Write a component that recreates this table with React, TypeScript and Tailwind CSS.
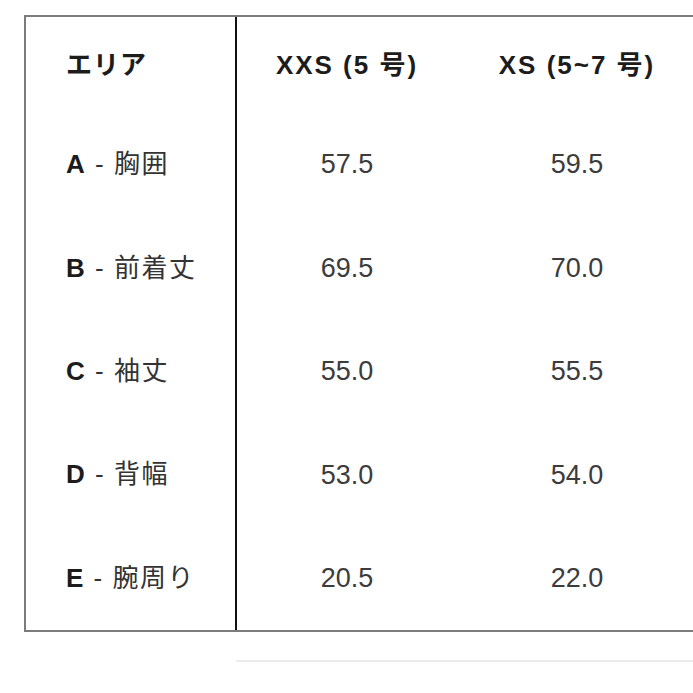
const rows = [
  { key: "A", name: "胸囲", xxs: "57.5", xs: "59.5" },
  { key: "B", name: "前着丈", xxs: "69.5", xs: "70.0" },
  { key: "C", name: "袖丈", xxs: "55.0", xs: "55.5" },
  { key: "D", name: "背幅", xxs: "53.0", xs: "54.0" },
  { key: "E", name: "腕周り", xxs: "20.5", xs: "22.0" },
];

const font = "font-['Liberation_Sans','Noto_Sans_CJK_JP',sans-serif]";

export default function App() {
  return (
    <div className={`w-[693px] h-[693px] overflow-hidden bg-white ${font} text-[#1c1c1c]`}>
      <div className="pt-[15px] pl-[24px]">
        <div className="w-[720px] border-t-2 border-l-2 border-b-2 border-[#7c7c7c]">
          <div className="grid grid-cols-[209px_2px_220px_240px] h-[96px] items-center">
            <div className="pl-[40px] text-[26px] font-bold tracking-[1px]">エリア</div>
            <div className="h-full bg-[#111]" />
            <div className="text-center text-[26px] font-bold tracking-[2px]">XXS (5 号)</div>
            <div className="text-center text-[26px] font-bold tracking-[2px]">XS (5~7 号)</div>
          </div>
          {rows.map((r) => (
            <div key={r.key} className="grid grid-cols-[209px_2px_220px_240px] h-[103.4px] items-center">
              <div className="pl-[40px] text-[26px] tracking-[1.5px]">
                <span className="font-bold">{r.key}</span>
                <span className="text-[#333]"> - {r.name}</span>
              </div>
              <div className="h-full bg-[#111]" />
              <div className="text-center text-[27px] text-[#3c3c3c]">{r.xxs}</div>
              <div className="text-center text-[27px] text-[#3c3c3c]">{r.xs}</div>
            </div>
          ))}
        </div>
        <div className="ml-[212px] mt-[28px] h-[2px] bg-[#ebebeb]" />
      </div>
    </div>
  );
}
